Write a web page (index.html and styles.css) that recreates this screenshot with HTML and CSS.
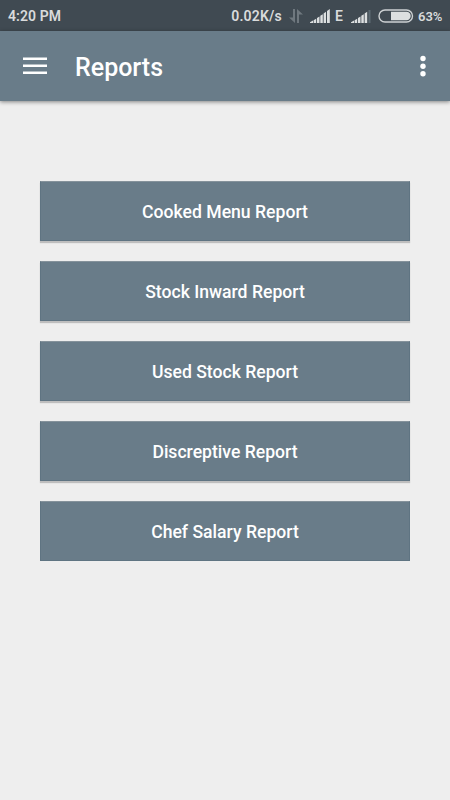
FILE: index.html
```html
<!DOCTYPE html>
<html lang="en">
<head>
  <meta charset="UTF-8">
  <meta name="viewport" content="width=device-width, initial-scale=1.0">
  <link rel="stylesheet" href="styles.css">
  <title>Reports</title>
</head>
<body>
  <div class="statusbar">
    <span class="time">4:20 PM</span>
    <span class="speed">0.02K/s</span>
    <svg class="arrows" width="14" height="14" viewBox="0 0 14 14" fill="#6f787f">
      <path d="M4 0h2v14L0 8.500h4z"/>
      <path d="M8 0l6 5.500h-4V14H8z"/>
    </svg>
    <svg class="signal" width="20" height="14" viewBox="0 0 20 14" fill="#dcdfe0">
      <path d="M0 14v-.8L3 11.500V14zM3.600 11.200l2.600-1.500V14H3.600zM7 9l2.500-1.500V14H7zM10.300 6.800l2.500-1.500V14h-2.500zM13.600 4.500L16 2.800V14h-2.400zM17 2l2.800-2v14H17z"/>
    </svg>
    <span class="network">E</span>
    <svg class="signal2" width="20" height="14" viewBox="0 0 20 14" fill="#dcdfe0">
      <path d="M0 14v-.8L3 11.500V14zM3.600 11.200l2.600-1.500V14H3.600zM7 9l2.500-1.500V14H7zM10.300 6.800l2.500-1.500V14h-2.500zM13.600 4.500L16.200 2.800V14h-2.600z"/>
      <path fill="#5c6a73" d="M17.500 1h2v13h-2z"/>
    </svg>
    <svg class="battery" width="36" height="14" viewBox="0 0 36 14">
      <rect x="1" y="1" width="33.500" height="12" rx="6" fill="none" stroke="#cdd1d3" stroke-width="1.400"/>
      <path fill="#dcdfe0" d="M13 2.800h15.500a4.200 4.200 0 0 1 0 8.400H13z"/>
    </svg>
    <span class="percent">63%</span>
  </div>

  <div class="toolbar">
    <svg class="menu" width="24" height="18" viewBox="0 0 24 18" fill="#fff">
      <path d="M0 0.500h24v2.600H0zM0 7.500h24v2.600H0zM0 14.400h24V17H0z"/>
    </svg>
    <h1>Reports</h1>
    <svg class="more" width="6" height="22" viewBox="0 0 6 22" fill="#fff">
      <circle cx="3" cy="3.500" r="2.700"/>
      <circle cx="3" cy="11.200" r="2.700"/>
      <circle cx="3" cy="18.800" r="2.700"/>
    </svg>
  </div>

  <div class="reports">
    <button>Cooked Menu Report</button>
    <button>Stock Inward Report</button>
    <button>Used Stock Report</button>
    <button>Discreptive Report</button>
    <button class="last">Chef Salary Report</button>
  </div>
</body>
</html>
```

FILE: styles.css
```css
body {
  margin: 0;
  height: 800px;
  background-color: #eeeeee;
  font-family: Roboto, "Liberation Sans", sans-serif;
  overflow: hidden;
}
.statusbar {
  display: flex;
  align-items: center;
  height: 31px;
  padding: 1px 8px 0 8px;
  box-sizing: border-box;
  background-color: #404a52;
  color: #d9dbdc;
  font-size: 14px;
  font-weight: 600;
  white-space: nowrap;
}
.time {
  margin-right: auto;
  letter-spacing: 0.1px;
}
.speed {
  letter-spacing: 0.2px;
}
.arrows {
  margin-left: 7px;
}
.signal {
  margin-left: 7px;
}
.network {
  width: 8px;
  margin-left: 5px;
}
.signal2 {
  margin-left: 8px;
}
.battery {
  margin-left: 7px;
}
.percent {
  width: 24px;
  margin-left: 4px;
  font-size: 13px;
}
.toolbar {
  display: flex;
  align-items: center;
  height: 70px;
  padding: 0 24.5px 0 23px;
  box-sizing: border-box;
  background-color: #697c89;
  box-shadow: 0 1px 4px rgba(0, 0, 0, 0.45);
}
.toolbar h1 {
  margin: 3px auto 0 28px;
  color: #fff;
  font-size: 25px;
  font-weight: 500;
}
.reports {
  display: flex;
  flex-direction: column;
  gap: 20px;
  padding: 80px 40px;
}
.reports button {
  height: 60px;
  padding: 2px 0 0;
  border: 1px solid #5f7482;
  border-top-color: #85929b;
  background-color: #697c89;
  color: #fff;
  font-family: inherit;
  font-size: 17.6px;
  font-weight: 500;
  box-shadow: 0 2px 1px rgba(0, 0, 0, 0.2);
}
.reports .last {
  box-shadow: none;
}
```
